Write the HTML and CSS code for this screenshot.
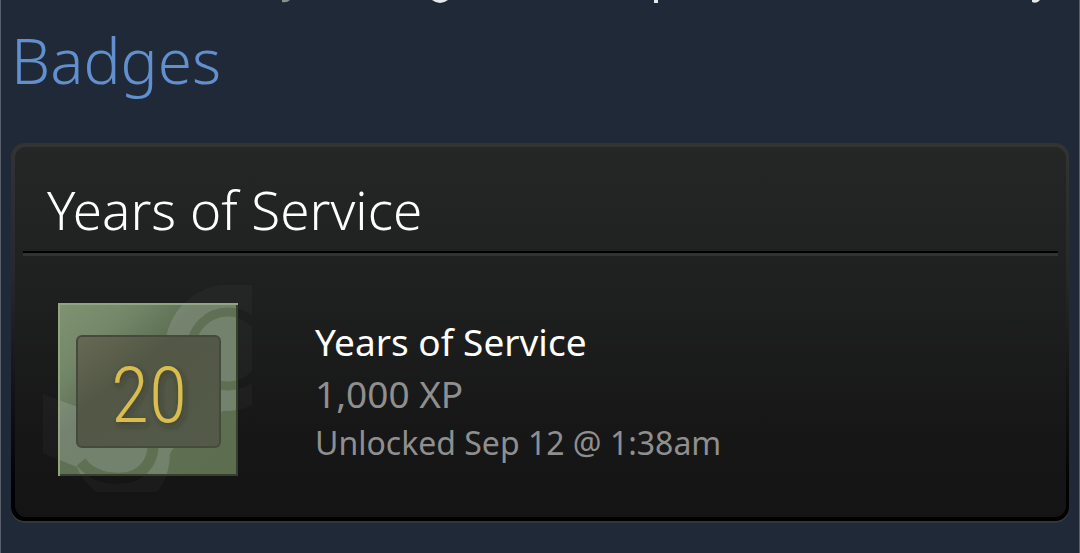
FILE: index.html
```
<!DOCTYPE html>
<html lang="en">

<head>
<meta charset="utf-8">
<meta name="viewport" content="width=device-width, initial-scale=1">

<title>Badges</title>

<link rel="stylesheet" href="styles.css">
</head>

<body>

	<!-- descenders of the line that is scrolled off the top -->
	<svg class="cutoff" viewBox="0 0 1080 4" aria-hidden="true">
		<path d="M282 0h8q-3 3-8 2z" fill="#8d8e8f"/>
		<path d="M432 0h16q-8 6-16 0z" fill="#e6e8ea"/>
		<path d="M654 0h4v3h-4z" fill="#e6e8ea"/>
		<path d="M1032 0h8q-3 4-8 2z" fill="#e6e8ea"/>
	</svg>

	<h1>Badges</h1>

	<div class="card">
		<div class="card_inner">
			<h2>Years of Service</h2>

			<div class="badge">
				<svg class="badge_icon" viewBox="0 0 210 208" role="img" aria-label="20 years">
					<defs>
						<linearGradient id="green" x1="0" y1="0" x2="1" y2="1">
							<stop offset="0" stop-color="#7d9371"/>
							<stop offset="0.2" stop-color="#75896a"/>
							<stop offset="0.4" stop-color="#5f7055"/>
							<stop offset="1" stop-color="#5d6e4f"/>
						</linearGradient>
						<linearGradient id="panel" x1="0" y1="0" x2="1" y2="1">
							<stop offset="0" stop-color="#666954"/>
							<stop offset="0.35" stop-color="#535846"/>
							<stop offset="1" stop-color="#545a48"/>
						</linearGradient>
						<filter id="shadow" x="-20%" y="-20%" width="140%" height="140%">
							<feDropShadow dx="2" dy="3" stdDeviation="3" flood-color="#222" flood-opacity="0.5"/>
						</filter>
						<mask id="rings">
							<rect width="210" height="208" fill="#fff"/>
							<circle cx="185" cy="64" r="37" fill="none" stroke="#000" stroke-width="9"/>
							<path d="M38 177q14 18 41 16a31 32 0 0 0 31-33v-20" fill="none" stroke="#000" stroke-width="11"/>
						</mask>
						<clipPath id="square">
							<rect x="15" y="18" width="180" height="173"/>
						</clipPath>
						<g id="steam" mask="url(#rings)">
							<path d="M209 0H184a62 65 0 0 0-62 62L80 130 32 121 0 109v59l34 14q6 16 20 25h60q12-14 13-38l2-4q3-4 10-6l41-33q18 0 29-6z"/>
						</g>
					</defs>
					<use href="#steam" fill="#fff" opacity="0.025"/>
					<rect x="15" y="18" width="180" height="173" fill="url(#green)"/>
					<g clip-path="url(#square)">
						<use href="#steam" fill="#a0aaa3" opacity="0.32"/>
					</g>
					<path d="M16 191V19H195" fill="none" stroke="#91a580" stroke-width="2"/>
					<path d="M17 190H194V20" fill="none" stroke="#34422b" stroke-width="2"/>
					<rect x="34" y="51" width="143" height="111" rx="5" fill="url(#panel)" stroke="#454b3c" stroke-width="2"/>
					<text class="badge_years" x="106" y="137" text-anchor="middle" filter="url(#shadow)">20</text>
				</svg>

				<div class="badge_text">
					<div class="name">Years of Service</div>
					<div class="xp">1,000 XP</div>
					<div class="unlocked">Unlocked Sep 12 @ 1:38am</div>
				</div>
			</div>
		</div>
	</div>

</body>
</html>
```
FILE: styles.css
```
	* {
		box-sizing: border-box;
	}

	body {
		margin: 0;
		min-height: 100vh;
		padding: 0 10px 30px 10px;
		background-color: #202937;
		border-left: 1px solid #5a606b;
		border-right: 1px solid #5a606b;
		font-family: "Noto Sans", sans-serif;
	}

	.cutoff {
		display: block;
		width: calc(100% + 22px);
		margin: 0 -11px;
	}

	h1 {
		margin: 14px 0 41px 0;
		font-size: 62px;
		font-weight: 300;
		line-height: 84px;
		color: #6290cf;
	}

	.card {
		padding: 4px 3px 4px 4px;
		border-radius: 14px;
		background: linear-gradient(#323332, #282828 35%, #030303 90%, #000);
		box-shadow: 0 2px 0 #353637;
	}

	.card_inner {
		padding: 0 8px 24px 8px;
		border-radius: 11px;
		background: linear-gradient(#252726, #1f2120 35%, #171717 75%, #141414);
	}

	h2 {
		margin: 0;
		padding: 28px 24px 6px 24px;
		font-size: 53px;
		font-weight: 300;
		line-height: 70px;
		color: #fff;
		border-bottom: 2px solid #000;
		box-shadow: 0 3px 0 #313232;
	}

	.badge {
		display: flex;
		align-items: center;
		padding: 32px 20px 0 20px;
	}

	.badge_icon {
		flex: none;
		width: 210px;
		height: 208px;
		margin-right: 62px;
	}

	.badge_years {
		font-family: "Liberation Sans Narrow", "Roboto Condensed", "DejaVu Sans Condensed", sans-serif;
		font-size: 78px;
		font-weight: 300;
		fill: #dabd4d;
	}

	.badge_text {
		padding-top: 4px;
		color: #8f8f8f;
	}

	.name {
		font-size: 37px;
		line-height: 52px;
		color: #fff;
	}

	.xp {
		font-size: 37px;
		line-height: 52px;
	}

	.unlocked {
		font-size: 32px;
		line-height: 46px;
	}
```
